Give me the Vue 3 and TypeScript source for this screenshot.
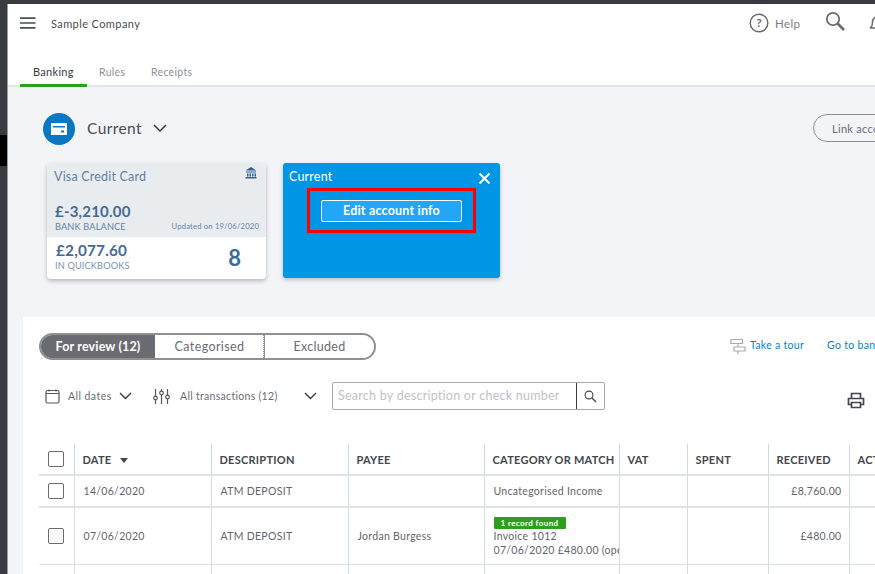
<script setup lang="ts">
interface Col { label: string; width: number; sort?: boolean }
const cols: Col[] = [
  { label: 'DATE', width: 137, sort: true },
  { label: 'DESCRIPTION', width: 137 },
  { label: 'PAYEE', width: 136 },
  { label: 'CATEGORY OR MATCH', width: 135 },
  { label: 'VAT', width: 68 },
  { label: 'SPENT', width: 81 },
  { label: 'RECEIVED', width: 81 },
  { label: 'ACTION', width: 80 },
]
const tabs = ['Banking', 'Rules', 'Receipts']
</script>

<template>
  <div class="frame">
    <div class="side"><div class="side-black"></div></div>
    <div class="app">
      <header class="top">
        <svg class="burger" width="16" height="12" viewBox="0 0 16 12"><path d="M0 1.200h15.500M0 6h15.500M0 10.800h15.500" stroke="#4a4e55" stroke-width="1.700" fill="none"/></svg>
        <span class="company">Sample Company</span>
        <div class="top-right">
          <svg width="20" height="20" viewBox="0 0 20 20"><circle cx="10" cy="10" r="8.800" fill="none" stroke="#6b6c72" stroke-width="1.500"/><text x="10" y="14" text-anchor="middle" class="q">?</text></svg>
          <span class="help">Help</span>
          <svg class="mag" width="21" height="21" viewBox="0 0 21 21"><circle cx="8" cy="8" r="6.200" fill="none" stroke="#6b6c72" stroke-width="1.800"/><path d="M12.500 12.500l6.500 6.500" stroke="#6b6c72" stroke-width="2.600"/></svg>
          <svg class="bell" width="20" height="20" viewBox="0 0 20 20"><path d="M2 15c2-1 2.500-3 2.500-6a5.500 5.500 0 0 1 11 0c0 3 .5 5 2.500 6zM8 18h4" fill="none" stroke="#6b6c72" stroke-width="1.500"/></svg>
        </div>
      </header>
      <nav class="tabs">
        <span v-for="(t, i) in tabs" :key="t" class="tab" :class="{ active: i === 0 }">{{ t }}</span>
      </nav>
      <section class="band">
        <div class="acct-row">
          <span class="acct-icon">
            <svg width="18" height="14" viewBox="0 0 18 14"><path fill-rule="evenodd" fill="#fff" d="M1 1h16v12H1zM3 4v1.500h12V4zM11 8.500v2h3v-2z"/></svg>
          </span>
          <span class="acct-name">Current</span>
          <svg class="chev" width="14" height="9" viewBox="0 0 14 9"><path d="M1 1l6 6 6-6" fill="none" stroke="#393a3d" stroke-width="1.500"/></svg>
          <button class="link-btn">Link account</button>
        </div>
        <div class="cards">
          <div class="card">
            <div class="card-top">
              <div class="card-title">
                <span>Visa Credit Card</span>
                <svg width="12" height="12" viewBox="0 0 12 12"><path fill="#2f6296" d="M6 0l5.500 3.500H.5zM1 4.500h10v1H1zM2 6.500h1.500v3H2zM4.500 6.500H6v3H4.500zM7 6.500h1.500v3H7zM9.500 6.500H11v3H9.500zM.5 10h11v1.500H.5z"/></svg>
              </div>
              <div class="bal">£-3,210.00</div>
              <div class="bal-row"><span>BANK BALANCE</span><span class="upd">Updated on 19/06/2020</span></div>
            </div>
            <div class="card-bot">
              <div>
                <div class="qb">£2,077.60</div>
                <div class="qb-l">IN QUICKBOOKS</div>
              </div>
              <div class="count">8</div>
            </div>
          </div>
          <div class="blue">
            <div class="blue-head">
              <span>Current</span>
              <svg width="13" height="13" viewBox="0 0 13 13"><path d="M1.500 1.500l10 10M11.500 1.500l-10 10" stroke="#fff" stroke-width="2" fill="none"/></svg>
            </div>
            <div class="hl">
              <button class="edit">Edit account info</button>
            </div>
          </div>
        </div>
      </section>
      <section class="panel">
        <div class="row-a">
          <div class="seg">
            <span class="seg-i on">For review (12)</span>
            <span class="seg-i mid">Categorised</span>
            <span class="seg-i last">Excluded</span>
          </div>
          <div class="links">
            <svg width="16" height="17" viewBox="0 0 16 17"><path d="M1 1.500h11.500v4H1zM4 9h11v4H4zM8 5.500V9M8 13v3" fill="none" stroke="#a8abb0" stroke-width="1.200"/></svg>
            <a class="lnk">Take a tour</a>
            <a class="lnk bank">Go to bank register</a>
          </div>
        </div>
        <div class="row-b">
          <svg width="15" height="15" viewBox="0 0 15 15"><rect x="1" y="1.500" width="13" height="12.500" rx="1.500" fill="none" stroke="#55575c" stroke-width="1.200"/><path d="M1 4.500h13M4 .5v2M11 .5v2" stroke="#55575c" stroke-width="1.200"/></svg>
          <span class="f dates">All dates</span>
          <svg class="c1" width="13" height="8" viewBox="0 0 13 8"><path d="M1 1l5.500 5.500L12 1" fill="none" stroke="#393a3d" stroke-width="1.400"/></svg>
          <svg class="sl" width="17" height="17" viewBox="0 0 17 17" fill="none" stroke="#55575c" stroke-width="1.200"><path d="M2.500 1v15M8.500 1v15M14.500 1v15"/><circle cx="2.500" cy="10" r="1.800" fill="#fff"/><circle cx="8.500" cy="5" r="1.800" fill="#fff"/><circle cx="14.500" cy="9" r="1.800" fill="#fff"/></svg>
          <span class="f trans">All transactions (12)</span>
          <svg class="c2" width="13" height="8" viewBox="0 0 13 8"><path d="M1 1l5.500 5.500L12 1" fill="none" stroke="#393a3d" stroke-width="1.400"/></svg>
          <div class="search">
            <span class="ph">Search by description or check number</span>
            <span class="s-btn"><svg width="13" height="13" viewBox="0 0 13 13"><circle cx="5" cy="5" r="3.900" fill="none" stroke="#44464b" stroke-width="1.100"/><path d="M8 8l4 4" stroke="#44464b" stroke-width="1.400"/></svg></span>
          </div>
          <svg class="print" width="18" height="17" viewBox="0 0 18 17" fill="none" stroke="#44464b" stroke-width="1.700"><path d="M4.500 6V1.500h9V6M4.500 12.500H1.500V6.500h15v6h-3M4.500 10.500h9v5h-9z"/></svg>
        </div>
        <table class="tbl">
          <colgroup><col class="c0"/><col v-for="c in cols" :key="c.label" :style="{ width: c.width + 'px' }"/></colgroup>
          <thead>
            <tr>
              <th class="chk"><span class="box"></span></th>
              <th v-for="c in cols" :key="c.label">{{ c.label }}<i v-if="c.sort" class="tri"></i></th>
            </tr>
          </thead>
          <tbody>
            <tr class="r1">
              <td class="chk"><span class="box"></span></td>
              <td>14/06/2020</td><td>ATM DEPOSIT</td><td></td><td>Uncategorised Income</td><td></td><td></td><td class="num">£8,760.00</td><td></td>
            </tr>
            <tr class="r2">
              <td class="chk"><span class="box"></span></td>
              <td>07/06/2020</td><td>ATM DEPOSIT</td><td>Jordan Burgess</td>
              <td class="match">
                <div class="clip">
                  <span class="badge">1 record found</span>
                  <div>Invoice 1012</div>
                  <div class="nw">07/06/2020 £480.00 (open)</div>
                </div>
              </td>
              <td></td><td></td><td class="num">£480.00</td><td></td>
            </tr>
            <tr class="r3"><td class="chk"></td><td></td><td></td><td></td><td></td><td></td><td></td><td></td><td></td></tr>
          </tbody>
        </table>
      </section>
    </div>
  </div>
</template>

<style>
html, body { margin: 0; height: 100%; overflow: hidden; background: #3a3b40; }
</style>

<style scoped>
.frame { width: 875px; height: 574px; display: flex; padding-top: 4px; box-sizing: border-box; background: #3a3b40; overflow: hidden; font-family: Lato, "Open Sans", sans-serif; color: #393a3d; }
.side { width: 8px; flex: none; padding-top: 131px; border-right: 1px solid #9a9ba0; box-sizing: border-box; }
.side-black { height: 31px; background: #000; }
.app { width: 867px; flex: none; background: #f2f4f8; overflow: hidden; }
.top { height: 38px; background: #fff; display: flex; align-items: center; padding: 0 0 0 12px; white-space: nowrap; }
.company { margin-left: 15px; font-size: 11px; letter-spacing: .4px; color: #4a4c52; }
.top-right { display: flex; align-items: center; margin-left: auto; width: 126px; flex: none; }
.top-right svg { flex: none; }
.help { font-size: 11.500px; letter-spacing: .4px; color: #7a7c82; margin-left: 6px; flex: none; }
.mag { margin-left: 25px; margin-top: -3px; }
.bell { margin-left: 22px; }
.tabs { height: 45px; background: #fff; display: flex; padding-left: 12px; border-bottom: 2px solid #e3e5e8; box-sizing: border-box; }
.tab { font-size: 10.500px; letter-spacing: .3px; color: #8d9096; padding-top: 21px; height: 45px; box-sizing: border-box; width: 52px; line-height: 18px; }
.tab.active { color: #393a3d; border-bottom: 3px solid #2ca01c; width: 67px; padding-left: 13px; margin-right: 12px; font-size: 11px; }
.band { height: 230px; padding: 0 0 0 35px; box-sizing: border-box; }
.acct-row { display: flex; align-items: center; height: 32px; padding-top: 26px; position: relative; }
.acct-icon { width: 32px; height: 32px; border-radius: 50%; background: #0a77c3; display: flex; align-items: center; justify-content: center; flex: none; }
.acct-name { font-size: 15.500px; letter-spacing: .4px; margin: -2px 0 0 12px; color: #4a4c52; }
.chev { margin-left: 11px; margin-top: -2px; }
.link-btn { position: absolute; left: 770px; top: 27px; width: 120px; height: 28px; border: 1px solid #8d9096; border-radius: 14px; background: transparent; font: 11px Lato, sans-serif; letter-spacing: .3px; color: #6b6c72; text-align: left; padding-left: 18px; white-space: nowrap; }
.cards { display: flex; gap: 16px; margin-top: 18px; padding-left: 4px; }
.card { width: 219px; height: 116px; border-radius: 4px; background: #fff; box-shadow: 0 2px 4px rgba(0,0,0,.25); overflow: hidden; flex: none; }
.card-top { height: 74px; background: #e9ecef; padding: 7px 7px 0 7px; box-sizing: border-box; }
.card-title { display: flex; justify-content: space-between; font-size: 12.500px; letter-spacing: .2px; line-height: 14px; color: #5f82a8; }
.card-title svg { margin: -3px 2px 0 0; }
.bal { font-size: 15px; font-weight: 700; letter-spacing: .2px; margin: 19px 0 0 1px; line-height: 17px; color: #456a96; }
.bal-row { display: flex; justify-content: space-between; font-size: 9.200px; letter-spacing: .15px; line-height: 12px; margin: 1px 0 0 1px; color: #5f82a8; }
.upd { font-size: 7.600px; letter-spacing: .2px; margin-top: -1px; }
.card-bot { display: flex; justify-content: space-between; padding: 5px 25px 0 8px; }
.qb { font-size: 15.300px; font-weight: 700; letter-spacing: .2px; line-height: 17px; color: #456a96; margin-left: 1px; }
.qb-l { font-size: 9.200px; letter-spacing: .15px; line-height: 12px; margin-top: 1px; color: #7a93ae; }
.count { font-size: 22px; font-weight: 700; color: #3e6a99; line-height: 30px; margin-top: 1px; }
.blue { width: 217px; height: 115px; margin-left: 1px; background: #0096e6; border-radius: 3px; box-shadow: 0 2px 4px rgba(0,0,0,.22); padding: 6px 9px 0 6px; box-sizing: border-box; color: #fff; flex: none; }
.blue-head { display: flex; justify-content: space-between; font-size: 12.500px; letter-spacing: .2px; line-height: 14px; height: 16px; padding-top: 1px; box-sizing: border-box; }
.blue-head svg { margin-top: 2px; flex: none; }
.hl { width: 169px; height: 45px; margin: 3px 0 0 18px; border: 3px solid #f00; box-sizing: border-box; display: flex; align-items: center; justify-content: center; }
.edit { width: 141px; height: 22px; padding: 0; background: #22a6f5; border: 1px solid #fff; border-radius: 2px; color: #fff; font: 700 12.500px Lato, sans-serif; letter-spacing: .2px; }
.panel { margin-left: 15px; height: 257px; background: #fff; overflow: hidden; position: relative; }
.row-a { display: flex; align-items: center; height: 27px; margin-top: 16px; padding-left: 16px; }
.seg { display: flex; flex: none; width: 337px; height: 27px; border: 2px solid #8d9096; border-radius: 14px; box-sizing: border-box; overflow: hidden; font-size: 12.500px; letter-spacing: .3px; }
.seg-i { display: flex; align-items: center; justify-content: center; color: #6b6c72; }
.seg-i.on { width: 114px; background: #6b6c72; color: #fff; font-weight: 700; letter-spacing: .15px; }
.seg-i.mid { width: 109px; border-left: 2px solid #fff; border-right: 1px dotted #8d9096; box-sizing: border-box; letter-spacing: .4px; padding-right: 1px; }
.seg-i.last { flex: 1; border-left: 1px solid #8d9096; }
.links { display: flex; align-items: center; white-space: nowrap; margin: -3px 0 0 354px; font-size: 10.500px; letter-spacing: .3px; flex: none; }
.links svg { flex: none; margin-top: 3px; }
.lnk { color: #0d7fc9; margin-left: 4px; }
.bank { margin-left: 23px; }
.row-b { display: flex; align-items: center; height: 28px; margin-top: 22px; padding-left: 22px; white-space: nowrap; }
.row-b svg { flex: none; }
.f { font-size: 10.500px; letter-spacing: .3px; color: #6b6c72; }
.dates { margin-left: 8px; width: 44px; letter-spacing: .45px; }
.c1 { margin-left: 7px; }
.sl { margin-left: 21px; }
.trans { margin-left: 10px; width: 108px; }
.c2 { margin-left: 16px; }
.search { margin-left: 15px; width: 273px; flex: none; height: 28px; border: 1px solid #a8abb0; border-radius: 2px; box-sizing: border-box; display: flex; }
.ph { flex: 1; font-size: 12.500px; letter-spacing: .25px; line-height: 26px; color: #bfc2c7; padding-left: 5px; overflow: hidden; }
.s-btn { width: 27px; flex: none; border-left: 1px solid #393a3d; display: flex; align-items: center; justify-content: center; }
.print { margin-left: 242px; margin-top: 9px; }
.tbl { position: absolute; left: 16px; top: 127px; border-collapse: collapse; table-layout: fixed; width: 890px; }
.c0 { width: 35px; }
th { height: 31px; padding: 0 0 0 8px; text-align: left; font-size: 11px; font-weight: 700; letter-spacing: .25px; color: #44464b; border-left: 1px solid #c9d9ec; border-bottom: 2px solid #dfe1e5; white-space: nowrap; overflow: hidden; box-sizing: border-box; }
td { padding: 0 0 0 9px; font-size: 10.500px; letter-spacing: .3px; color: #63656b; border-left: 1px solid #d4dce6; border-bottom: 1px solid #dfe1e5; white-space: nowrap; box-sizing: border-box; }
.r1 td { height: 32px; border-bottom-width: 2px; }
.r2 td { height: 57px; }
.r3 td { height: 30px; border-bottom: 0; }
th.chk, td.chk { border-left: 0; padding: 0 0 0 9px; }
.box { display: block; width: 16px; height: 16px; border: 1px solid #6b6c72; border-radius: 2px; box-sizing: border-box; }
.tri { display: inline-block; margin-left: 9px; border: 4px solid transparent; border-top: 5px solid #44464b; border-bottom: 0; vertical-align: 1px; }
.num { text-align: right; padding-right: 7px; }
.match { padding: 0; }
.clip { width: 125px; margin-left: 9px; overflow: hidden; line-height: 14px; margin-top: 2px; }
.nw { white-space: nowrap; }
.badge { display: block; width: 72px; height: 12px; line-height: 12px; background: #2ca01c; color: #fff; font-size: 8px; font-weight: 700; border-radius: 1px; text-align: center; letter-spacing: .4px; }
.q { font: 700 12px Lato, sans-serif; fill: #6b6c72; }
</style>
